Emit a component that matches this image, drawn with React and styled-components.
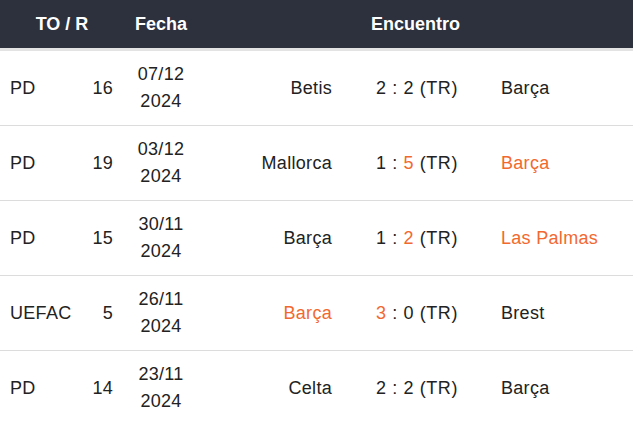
import React from "react";
import styled, { createGlobalStyle } from "styled-components";

const GlobalStyle = createGlobalStyle`
  body {
    margin: 0;
    background: #fff;
    font-family: "Liberation Sans", Arial, sans-serif;
  }
`;

const cols = "76px 48px 74px 144px 148px 1fr";

const Table = styled.div`
  width: 633px;
  font-size: 18px;
  color: #222;
`;

const HeadRow = styled.div`
  display: grid;
  grid-template-columns: ${cols};
  height: 48px;
  background: #2c313d;
  border-bottom: 3px solid #e3e3e3;
  color: #fff;
  font-weight: bold;
`;

const HeadCell = styled.div`
  grid-column: span ${({ span }) => span || 1};
  display: flex;
  align-items: center;
  justify-content: center;
`;

const Row = styled.div`
  display: grid;
  grid-template-columns: ${cols};
  height: 74px;
  border-bottom: 1px solid #dcdcdc;
  letter-spacing: 0.3px;
`;

const Cell = styled.div`
  display: flex;
  align-items: center;
  justify-content: ${({ align }) =>
    align === "right" ? "flex-end" : align === "center" ? "center" : "flex-start"};
  text-align: ${({ align }) => align || "left"};
  padding: ${({ pad }) => pad || "0"};
  line-height: 27px;
  color: ${({ hot }) => (hot ? "#f2692f" : "inherit")};
  white-space: nowrap;
`;

const Score = styled(Cell)`
  letter-spacing: 0.6px;
`;

const Goal = styled.span`
  color: ${({ hot }) => (hot ? "#f2692f" : "inherit")};
`;

const matches = [
  { to: "PD", r: 16, d: "07/12", y: "2024", home: "Betis", away: "Barça", hg: 2, ag: 2, win: null },
  { to: "PD", r: 19, d: "03/12", y: "2024", home: "Mallorca", away: "Barça", hg: 1, ag: 5, win: "away" },
  { to: "PD", r: 15, d: "30/11", y: "2024", home: "Barça", away: "Las Palmas", hg: 1, ag: 2, win: "away" },
  { to: "UEFAC", r: 5, d: "26/11", y: "2024", home: "Barça", away: "Brest", hg: 3, ag: 0, win: "home" },
  { to: "PD", r: 14, d: "23/11", y: "2024", home: "Celta", away: "Barça", hg: 2, ag: 2, win: null },
];

export default function App() {
  return (
    <>
      <GlobalStyle />
      <Table>
        <HeadRow>
          <HeadCell span={2}>TO / R</HeadCell>
          <HeadCell>Fecha</HeadCell>
          <HeadCell span={3}>Encuentro</HeadCell>
        </HeadRow>
        {matches.map((m, i) => (
          <Row key={i}>
            <Cell pad="0 0 0 10px">{m.to}</Cell>
            <Cell align="right" pad="0 11px 0 0">{m.r}</Cell>
            <Cell align="center">
              {m.d}
              <br />
              {m.y}
            </Cell>
            <Cell align="right" pad="0 10px 0 0" hot={m.win === "home"}>
              {m.home}
            </Cell>
            <Score align="center" pad="0 0 0 2px">
              <Goal hot={m.win === "home"}>{m.hg}</Goal>&nbsp;:&nbsp;
              <Goal hot={m.win === "away"}>{m.ag}</Goal>&nbsp;(TR)
            </Score>
            <Cell pad="0 0 0 11px" hot={m.win === "away"}>
              {m.away}
            </Cell>
          </Row>
        ))}
      </Table>
    </>
  );
}
